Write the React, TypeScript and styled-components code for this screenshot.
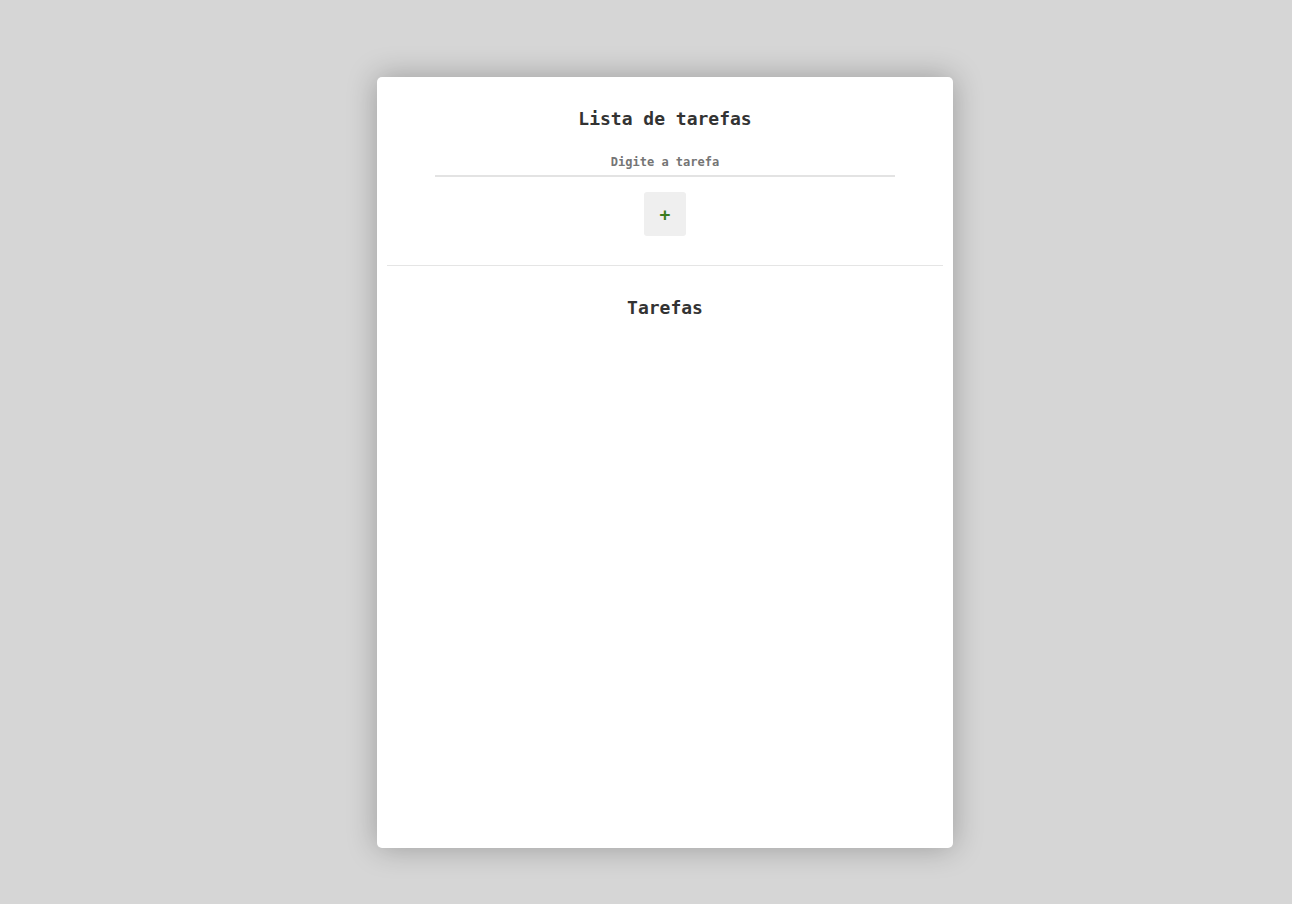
import React, { FC, useState } from "react";
import styled, { createGlobalStyle } from "styled-components";

const GlobalStyle = createGlobalStyle`
  * {
    box-sizing: border-box;
  }

  body {
    margin: 0;
    background: #d6d6d6;
    font-family: "DejaVu Sans Mono", "Liberation Mono", monospace;
  }
`;

const App: FC = () => {
  const [task, setTask] = useState("");
  const [tasks, setTasks] = useState<string[]>([]);

  const addTask = () => {
    if (!task.trim()) return;
    setTasks([...tasks, task.trim()]);
    setTask("");
  };

  return (
    <Page>
      <GlobalStyle />
      <Card>
        <Form>
          <Title>Lista de tarefas</Title>
          <Input
            placeholder="Digite a tarefa"
            value={task}
            onChange={(e) => setTask(e.target.value)}
          />
          <AddButton onClick={addTask}>+</AddButton>
        </Form>
        <Divider />
        <List>
          <Title>Tarefas</Title>
          {tasks.map((t, i) => (
            <Item key={i}>{t}</Item>
          ))}
        </List>
      </Card>
    </Page>
  );
};

export default App;

const Page = styled.div`
  min-height: 904px;
  display: flex;
  justify-content: center;
  align-items: flex-start;
  padding: 77px 0 0 38px;
`;

const Card = styled.div`
  width: 576px;
  height: 771px;
  background: #fff;
  border-radius: 5px;
  box-shadow: 0 0 30px rgba(0, 0, 0, 0.28);
  padding: 0 10px;
  display: flex;
  flex-direction: column;
`;

const Form = styled.div`
  display: flex;
  flex-direction: column;
  align-items: center;
  padding-top: 29px;
  padding-bottom: 29px;
`;

const Title = styled.h2`
  margin: 0;
  font-size: 18px;
  font-weight: bold;
  color: #333;
  line-height: 26px;
  text-align: center;
`;

const Input = styled.input`
  margin-top: 19px;
  width: 460px;
  height: 26px;
  border: none;
  border-bottom: 2px solid #e3e3e3;
  outline: none;
  text-align: center;
  font-family: inherit;
  font-size: 12px;
  font-weight: bold;
  color: #555;
  padding: 0 0 2px;

  &::placeholder {
    color: #757575;
  }
`;

const AddButton = styled.button`
  margin-top: 15px;
  width: 42px;
  height: 44px;
  border: none;
  border-radius: 3px;
  background: #efefef;
  color: #3a7d1c;
  font-family: inherit;
  font-size: 18px;
  font-weight: bold;
  cursor: pointer;
  padding: 0;
`;

const Divider = styled.hr`
  margin: 0;
  border: none;
  border-top: 1px solid #e5e5e5;
`;

const List = styled.div`
  display: flex;
  flex-direction: column;
  align-items: center;
  padding-top: 29px;
`;

const Item = styled.p`
  margin: 12px 0 0;
  font-size: 14px;
  color: #333;
`;
